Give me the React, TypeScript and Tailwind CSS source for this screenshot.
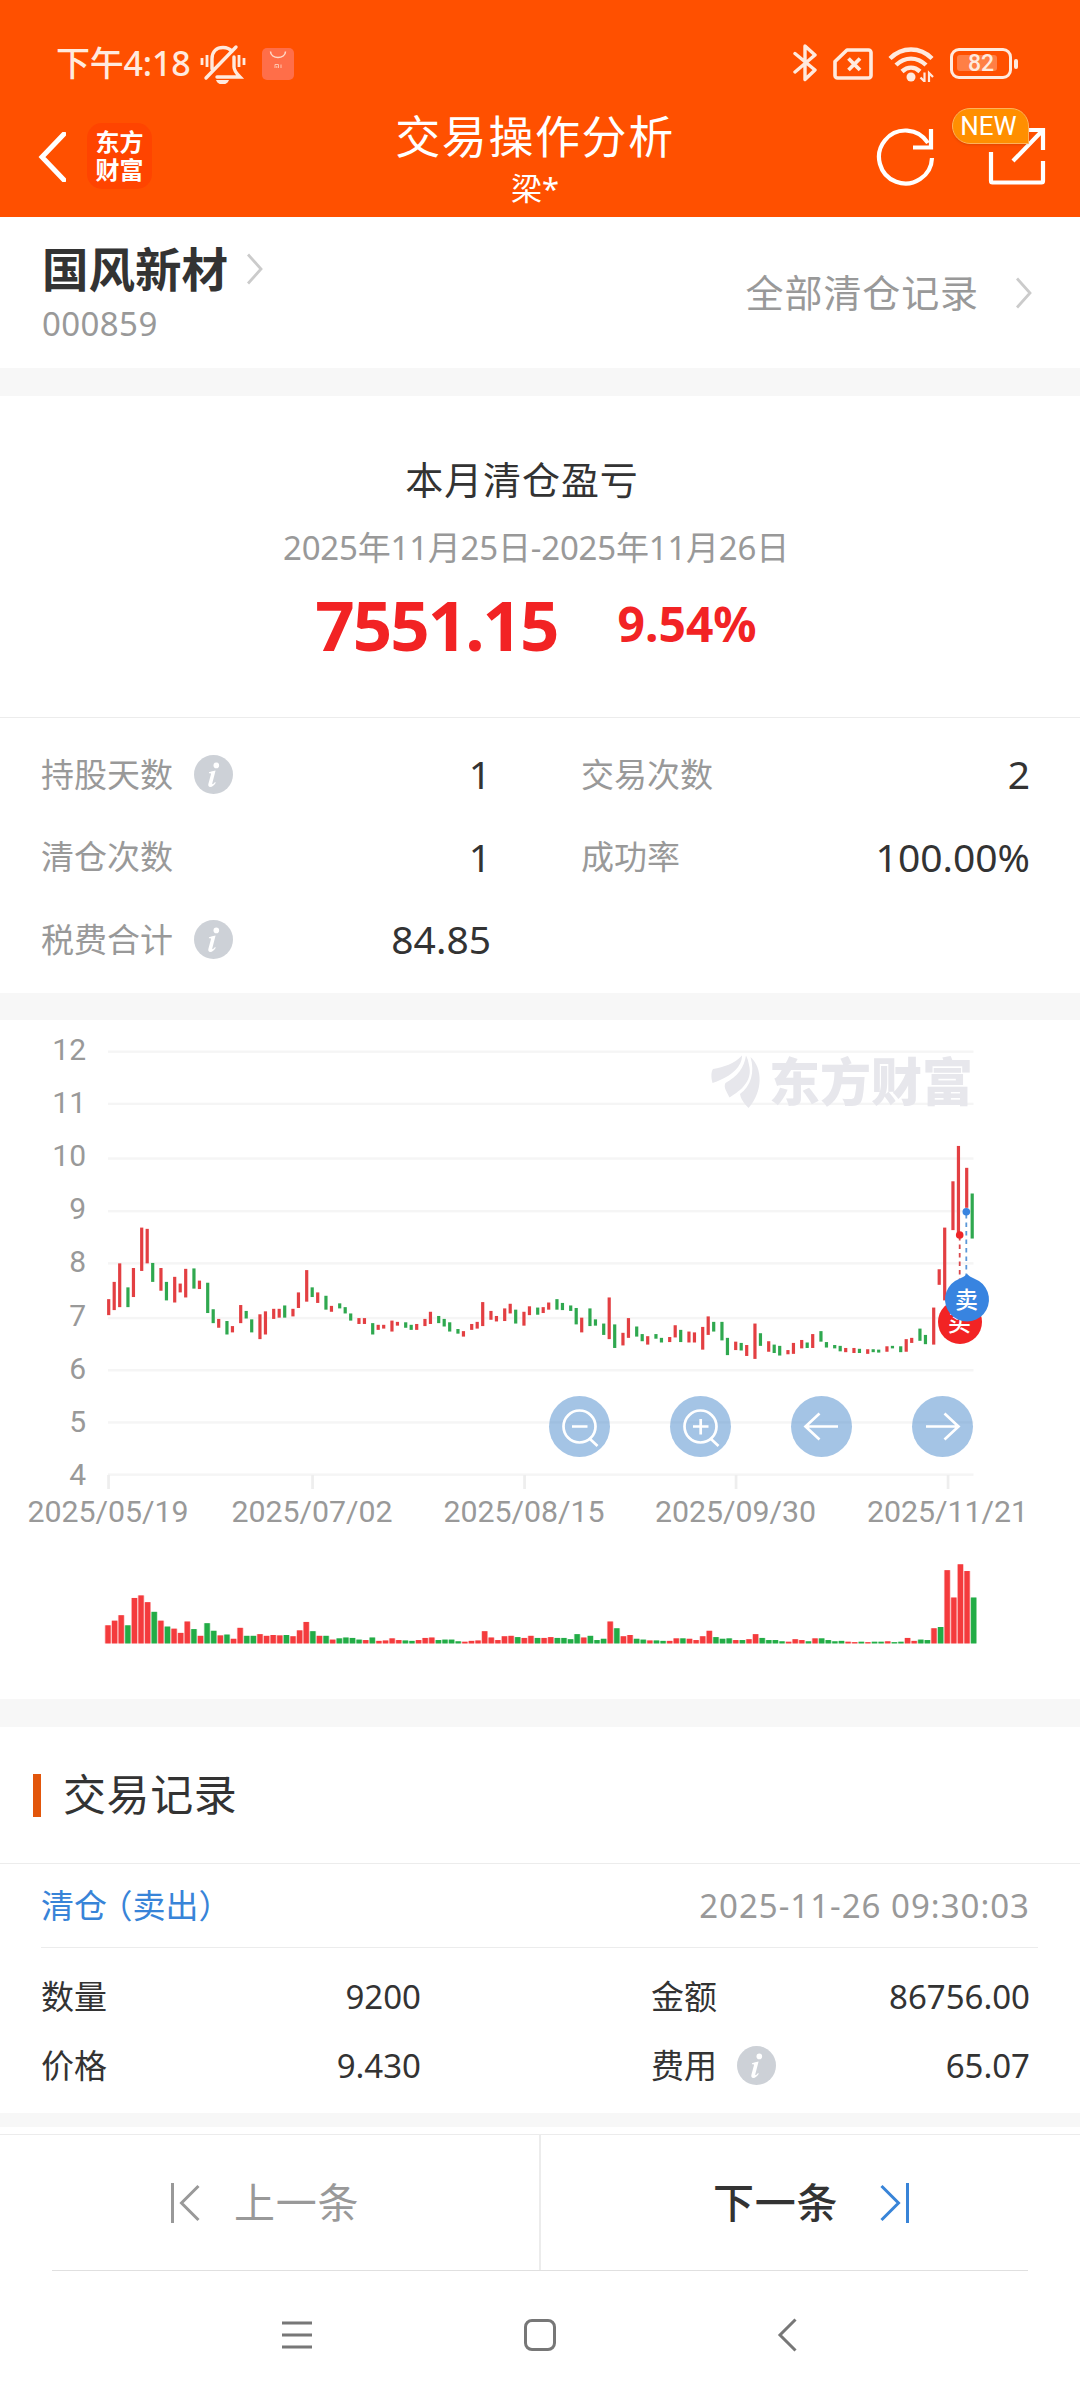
import type { ReactNode } from 'react';

type Bar = [color: 'r' | 'g', top: number, bottom: number, volumeTop: number, volumeColor?: 'r' | 'g'];

const RED = '#e33f42';
const GREEN = '#2fa84f';

// Vertical chart units -> px inside the chart panel
const py = (v: number) => v / 2.376 - 10;

const BARS: Bar[] = [
  ['r', 687, 725, 1462], ['r', 646, 713, 1451], ['r', 602, 706, 1438], ['g', 659, 706, 1462],
  ['r', 613, 682, 1397], ['r', 517, 620, 1391], ['r', 520, 602, 1407], ['g', 601, 646, 1430],
  ['r', 613, 667, 1451], ['g', 646, 690, 1465], ['r', 634, 695, 1470], ['r', 650, 671, 1480],
  ['r', 615, 683, 1453], ['g', 614, 662, 1471], ['r', 643, 663, 1487], ['g', 648, 720, 1457],
  ['g', 711, 744, 1475], ['r', 734, 755, 1486], ['g', 739, 771, 1484], ['r', 751, 766, 1494],
  ['r', 701, 744, 1468], ['g', 715, 733, 1487], ['g', 735, 766, 1487], ['r', 723, 782, 1483],
  ['r', 716, 771, 1487], ['r', 710, 734, 1485], ['r', 710, 731, 1486], ['g', 702, 731, 1485],
  ['r', 710, 728, 1488], ['r', 671, 708, 1474], ['r', 618, 693, 1454], ['g', 659, 682, 1476],
  ['r', 671, 696, 1487], ['g', 679, 712, 1487], ['r', 703, 717, 1496], ['g', 697, 709, 1493],
  ['g', 706, 721, 1491], ['g', 721, 738, 1492], ['r', 732, 746, 1496, 'g'], ['r', 732, 746, 1497],
  ['g', 744, 771, 1491], ['r', 748, 760, 1499], ['r', 748, 757, 1498], ['r', 738, 764, 1493],
  ['r', 741, 750, 1497], ['g', 742, 755, 1498], ['g', 748, 760, 1499], ['r', 746, 760, 1497],
  ['r', 734, 751, 1492], ['r', 717, 746, 1491], ['g', 727, 744, 1497], ['g', 734, 752, 1496],
  ['g', 742, 764, 1496], ['g', 758, 769, 1500], ['r', 763, 776, 1501], ['r', 746, 760, 1499],
  ['r', 741, 757, 1498], ['r', 694, 751, 1476], ['r', 715, 736, 1491], ['r', 727, 740, 1497],
  ['r', 709, 739, 1488], ['r', 698, 721, 1487], ['g', 712, 745, 1490], ['r', 717, 750, 1492],
  ['r', 704, 725, 1487], ['g', 707, 724, 1492], ['r', 706, 720, 1492], ['r', 695, 712, 1490],
  ['g', 687, 712, 1492], ['g', 696, 713, 1492], ['g', 702, 715, 1495], ['g', 708, 747, 1483],
  ['r', 731, 766, 1491], ['g', 709, 751, 1487], ['g', 735, 750, 1497], ['g', 745, 772, 1494],
  ['r', 683, 782, 1453], ['g', 747, 803, 1469], ['r', 767, 797, 1488], ['r', 732, 779, 1485],
  ['g', 752, 776, 1494], ['g', 770, 787, 1496], ['r', 775, 795, 1498], ['g', 770, 781, 1498],
  ['g', 779, 790, 1499], ['r', 777, 789, 1499], ['r', 749, 778, 1493], ['g', 760, 789, 1493],
  ['r', 764, 790, 1494], ['r', 766, 790, 1497], ['r', 753, 807, 1488], ['r', 728, 772, 1475],
  ['g', 741, 764, 1490], ['g', 741, 785, 1494], ['g', 779, 820, 1493], ['r', 788, 808, 1497],
  ['g', 791, 809, 1497], ['r', 796, 822, 1495], ['r', 745, 829, 1483], ['g', 768, 798, 1492],
  ['r', 787, 812, 1497, 'g'], ['g', 795, 815, 1497], ['g', 798, 821, 1500], ['r', 808, 818, 1501],
  ['r', 791, 817, 1495], ['r', 784, 804, 1497], ['g', 790, 803, 1500], ['r', 770, 803, 1493],
  ['g', 763, 788, 1493], ['g', 789, 802, 1497], ['g', 796, 804, 1500], ['g', 798, 811, 1499],
  ['r', 803, 813, 1501], ['r', 803, 815, 1502], ['g', 805, 815, 1501], ['r', 806, 817, 1502],
  ['g', 806, 813, 1501], ['g', 807, 814, 1501], ['r', 799, 812, 1500], ['g', 798, 804, 1502],
  ['g', 799, 813, 1501], ['r', 782, 812, 1492], ['r', 779, 791, 1499], ['g', 757, 786, 1496],
  ['g', 772, 794, 1497], ['r', 707, 795, 1469], ['r', 616, 653, 1466, 'g'], ['r', 517, 690, 1331],
  ['r', 407, 523, 1396], ['r', 323, 530, 1317], ['r', 375, 470, 1333], ['g', 436, 543, 1396],
];

const GRID = [99, 223, 353, 478, 602, 732, 856, 980, 1104];

const DATES = [
  { x: 108.5, label: '2025/05/19' },
  { x: 312.5, label: '2025/07/02' },
  { x: 524.5, label: '2025/08/15' },
  { x: 736, label: '2025/09/30' },
  { x: 948, label: '2025/11/21' },
];

function Chevron({ className }: { className: string }) {
  return (
    <svg className={`h-8 w-4 shrink-0 ${className}`} viewBox="0 0 16 32" fill="none" stroke="#cbcbcb" strokeWidth="2.8">
      <path d="M1 1.5 14 16 1 30.5" />
    </svg>
  );
}

function InfoIcon({ className }: { className: string }) {
  return (
    <svg className={`size-[39px] shrink-0 ${className}`} viewBox="0 0 39 39">
      <circle cx="19.5" cy="19.5" r="19.5" fill="#cdd1d7" />
      <circle cx="22.3" cy="10.4" r="2.8" fill="#fff" />
      <path
        d="M15 17.3c2-.9 4.300-1.500 6.600-1.800l-3.300 12.700c-.2.900.1 1.200.7.900.7-.4 1.300-1.100 2-2l.8.6c-1.600 2.700-3.500 4.200-5.500 4.200-1.700 0-2.400-1.200-1.900-3.100l2.500-9.300c.2-.8-.1-1.200-1-1.200h-1z"
        fill="#fff"
      />
    </svg>
  );
}

function StatusBar() {
  return (
    <div className="flex h-[82px] items-end pr-[62px] pl-[56px] text-[#ffeade]">
      <span className="h-[38px] w-[136px] text-[34px] leading-[38px] font-medium tracking-[-0.2px] whitespace-nowrap">
        下午4:18
      </span>
      <svg className="mb-[-2px] ml-[8px] h-10 w-[46px]" viewBox="0 0 46 40" fill="none" stroke="currentColor" strokeWidth="3.4">
        <path d="M12 25V15C12 7 17 3.500 23 3.500c4 0 7 1.500 9 4M34 13v10c0 4 3 7 6 10H17M6 34 36 3" strokeLinecap="round" />
        <path d="M2 14v7M7 11v12M39 11v12M44 14v7" strokeWidth="2.800" />
        <path d="M16 36h13c-1 3-3.500 4.500-6.500 4.500S17 39 16 36Z" fill="currentColor" stroke="none" />
      </svg>
      <svg className="mb-[2px] ml-[16px] size-8" viewBox="0 0 32 32" fill="none">
        <rect width="32" height="32" rx="5" fill="#ff6e49" />
        <path d="M8.500 3.500c0 8 15 8 15 0" stroke="#ffd9c8" strokeWidth="1.500" />
        <path d="M13 20v-3.500h3.500V20M19 16.500V20M14.800 18v2" stroke="#ffc4ae" />
      </svg>

      <svg className="ml-auto h-[39px] w-6" viewBox="0 0 24 39" fill="none" stroke="currentColor" strokeWidth="3.400" strokeLinejoin="round" strokeLinecap="round">
        <path d="M2 10.500 22 27 12 36.500V3L22 12 2 29" />
      </svg>
      <svg className="mb-[2px] ml-4 h-8 w-10" viewBox="0 0 40 32" fill="none" stroke="currentColor" strokeWidth="3.600">
        <path d="M14 2h21.500a2.500 2.500 0 0 1 2.500 2.500v23a2.500 2.500 0 0 1-2.500 2.500h-31A2.500 2.500 0 0 1 2 27.500V13.500Z" strokeLinejoin="round" />
        <path d="M15.500 10.500 27 22M27 10.500 15.500 22" strokeWidth="3.800" />
      </svg>
      <svg className="ml-[15px] h-9 w-[46px]" viewBox="0 0 46 36" fill="none" stroke="currentColor" strokeWidth="4.400">
        <path d="M2 12.500c12-12 30-12 42 0" />
        <path d="M8 19c9-8.500 21-8.500 30 0" />
        <path d="M14 25.500c5.500-5 12.500-5 18 0" />
        <circle cx="23" cy="31" r="4.500" fill="currentColor" stroke="none" />
        <path d="M36.500 26.500v9l-4-4M41 36v-9l4 4" strokeWidth="2.200" />
      </svg>
      <div className="mb-[3px] ml-4 flex items-center">
        <div className="relative flex h-[31px] w-[62px] items-center justify-center rounded-[9px] border-[3.500px] border-current">
          <div className="absolute top-[4px] left-[4px] h-4 w-10 rounded-[3px] bg-[#ff7f45]" />
          <span className="relative font-['Roboto'] text-[23px] leading-none font-medium">82</span>
        </div>
        <div className="ml-[2px] h-[10px] w-1 rounded-full bg-current" />
      </div>
    </div>
  );
}

function TitleBar() {
  return (
    <div className="relative flex h-[135px] text-white">
      <svg className="mt-[50px] ml-[38px] h-[50px] w-7 shrink-0" viewBox="0 0 28 50" fill="none" stroke="currentColor" strokeWidth="5">
        <path d="M26 2 4 25l22 23" strokeLinecap="round" />
      </svg>
      <div className="mt-[41px] ml-[21px] flex h-[66px] w-[65px] shrink-0 flex-col items-center justify-center rounded-[15px] bg-[#ff4400] text-[24px] leading-[28px] font-bold">
        <span>东方</span>
        <span>财富</span>
      </div>
      <div className="ml-[241px] flex w-[284px] flex-col items-center pt-[27px]">
        <h1 className="text-[45px] leading-[56px] tracking-[1.600px] whitespace-nowrap">交易操作分析</h1>
        <p className="text-[31px] leading-[46px]">梁*</p>
      </div>
      <svg className="mt-[44px] ml-[199px] h-[60px] w-[60px] shrink-0" viewBox="0 0 60 60" fill="none" stroke="currentColor" strokeWidth="4.200">
        <path d="M56 32A26.500 26.500 0 1 1 52 17" />
        <path d="M55 3v18.500H37" />
      </svg>
      <svg className="mt-[44px] ml-[52px] h-[60px] w-[58px] shrink-0" viewBox="0 0 58 60" fill="none" stroke="currentColor" strokeWidth="4.200">
        <path d="M3 26v29a1.500 1.500 0 0 0 1.500 1.500h49A1.500 1.500 0 0 0 55 55V35M38 4h17v20M55 4 25 35" />
      </svg>
      <div className="absolute top-[26px] left-[952px] flex h-[36px] w-[77px] items-center justify-center rounded-[18px] rounded-br-none border border-[#ffb25a] bg-[#ff8f00] pr-1 font-['Roboto'] text-[26px] leading-none shadow-sm">
        NEW
      </div>
    </div>
  );
}

function Stat({ label, value, info, className }: { label: string; value: string; info?: boolean; className: string }) {
  return (
    <div className={`flex h-[82.500px] items-center ${className}`}>
      <span className="text-[33px] text-[#999]">{label}</span>
      {info && <InfoIcon className="ml-[21px]" />}
      <span className="ml-auto text-[39px] text-[#333]">{value}</span>
    </div>
  );
}

function Detail({ label, value, info }: { label: string; value: string; info?: boolean }) {
  return (
    <div className="flex h-[69px] items-center text-[33px] text-[#333]">
      <span>{label}</span>
      {info && <InfoIcon className="ml-[20px]" />}
      <span className="ml-auto">{value}</span>
    </div>
  );
}

function RoundButton({ children }: { children: ReactNode }) {
  return (
    <button type="button" className="size-[61px] rounded-full bg-[#498acb]/50">
      <svg viewBox="0 0 61 61" fill="none" stroke="#fff" strokeWidth="2.700">
        {children}
      </svg>
    </button>
  );
}

function PriceChart() {
  return (
    <div className="relative h-[679px]">
      <svg width="1080" height="679" viewBox="0 0 1080 679" className="block">
        {/* Grid and axes */}
        {GRID.map((v, i) => (
          <g key={v}>
            <rect x="108" y={py(v) - 1.2} width="865.500" height="2.400" fill="#f5f5f5" />
            <text x="86" y={40 + i * 53.1} textAnchor="end" className="fill-[#999] font-['Roboto'] text-[30px]">
              {12 - i}
            </text>
          </g>
        ))}
        {DATES.map((d) => (
          <g key={d.label}>
            <rect x={d.x - 1.3} y="455" width="2.700" height="14" fill="#eee" />
            <text x={d.x - 0.5} y="502" textAnchor="middle" className="fill-[#999] font-['Roboto'] text-[30.300px]">
              {d.label}
            </text>
          </g>
        ))}

        {/* Watermark */}
        <g fill="#e7e7ec">
          <path d="M712.500 63C711 57 711 52 713 49C724 47 734 44 742 35.500C742 46 733 56 712.500 63Z" />
          <path d="M746 35.500C744 48 738 56 725.500 63C723 67 727 72 729.500 77.500C742 70 753 60 749 45Q748 39 746 35.500Z" />
          <path d="M750.500 37C763 48 763 72 748.500 88C745 84 741 80 740 74C751 66 755 52 750.500 37Z" />
          <text x="769" y="81" className="font-['Noto_Sans_CJK_SC',sans-serif] text-[51px] font-black">
            东方财富
          </text>
        </g>

        {BARS.map(([color, top, bottom, volumeTop, volumeColor], i) => {
          const x = 108.6 + 2.75 * Math.floor(i * 2.4 + 0.001);
          const vx = 108 + i * 6.608;
          const fill = (volumeColor ?? color) === 'r' ? '#f43b3d' : '#22ac46';
          return (
            <g key={i}>
              <rect x={x - 1.5} y={py(top)} width="3.200" height={(bottom - top) / 2.376} fill={color === 'r' ? RED : GREEN} />
              <rect x={vx - 3.3} y={py(volumeTop)} width="6.600" height={(1505 - volumeTop) / 2.376} fill={fill} opacity="0.350" />
              <rect x={vx - 2.6} y={py(volumeTop)} width="5.200" height={(1505 - volumeTop) / 2.376} fill={fill} />
            </g>
          );
        })}

        {/* Buy / sell markers */}
        <path d="M959.700 216v50" stroke="#d9474b" strokeWidth="1.800" strokeDasharray="4.500 4" />
        <path d="M966.300 194v62" stroke="#5c98d8" strokeWidth="1.800" strokeDasharray="4.500 4" />
        <circle cx="959.700" cy="215" r="3.800" fill="#ee2528" />
        <circle cx="966.300" cy="191.700" r="3.800" fill="#3884e0" />
        <circle cx="960" cy="302" r="22" fill="#f22324" />
        <text x="959.500" y="311" textAnchor="middle" fill="#fff" className="text-[23px] font-medium">买</text>
        <path d="M967 254c4 4 8 4.500 12 7a22 22 0 1 1-24 0c4-2.500 8-3 12-7Z" fill="#3884e0" />
        <text x="966.500" y="288" textAnchor="middle" fill="#fff" className="text-[23px] font-medium">卖</text>
      </svg>

      <div className="absolute top-[376px] left-[548.500px] flex gap-[60px]">
        <RoundButton>
          <circle cx="30.500" cy="30.500" r="16" />
          <path d="M23 30.500h15.500M41 43l7.500 7" />
        </RoundButton>
        <RoundButton>
          <circle cx="30.500" cy="30.500" r="16" />
          <path d="M23 30.500h15.500M30.700 23v15.500M41 43l7.500 7" />
        </RoundButton>
        <RoundButton>
          <path d="M47 30.500H14.500M28.500 17.500l-14 13 14 13" />
        </RoundButton>
        <RoundButton>
          <path d="M14 30.500h32.500M32.500 17.500l14 13-14 13" />
        </RoundButton>
      </div>
    </div>
  );
}

export default function App() {
  return (
    <div className="h-[2400px] w-[1080px] overflow-hidden bg-white font-['Noto_Sans','Noto_Sans_CJK_SC',sans-serif] text-[#333]">
      <header className="h-[217px] bg-[#ff5000]">
        <StatusBar />
        <TitleBar />
      </header>

      {/* Stock */}
      <section className="flex h-[151px] justify-between px-[42px]">
        <div className="pt-[22px]">
          <div className="flex items-center">
            <h2 className="text-[46.500px] leading-[60px] font-bold">国风新材</h2>
            <Chevron className="ml-[19px]" />
          </div>
          <p className="text-[33px] leading-[50px] tracking-[0.400px] text-[#999]">000859</p>
        </div>
        <div className="flex items-center pr-[6px] text-[38px] tracking-[0.900px] text-[#999]">
          全部清仓记录
          <Chevron className="ml-[37px]" />
        </div>
      </section>
      <div className="h-7 bg-[#f7f7f7]" />

      {/* Summary */}
      <section className="flex h-[322px] flex-col items-center border-b border-[#ececec] pt-[56px]">
        <h3 className="mr-[36px] text-[38px] leading-[54px] tracking-[0.900px]">本月清仓盈亏</h3>
        <p className="mr-[8px] mt-[18px] text-[33px] leading-[48px] tracking-[-0.200px] text-[#999]">
          2025年11月25日-2025年11月26日
        </p>
        <div className="mr-[8px] mt-[14px] flex items-center font-bold text-[#f22324]">
          <span className="text-[69px] leading-[76px] tracking-[-2px]">7551.15</span>
          <span className="ml-[60px] text-[48px] leading-[76px]">9.54%</span>
        </div>
      </section>
      <section className="flex h-[275px] flex-wrap content-start pt-[15px] pr-[50px] pl-[41px]">
        <Stat label="持股天数" value="1" info className="w-[450px]" />
        <Stat label="交易次数" value="2" className="ml-[90px] w-[449px]" />
        <Stat label="清仓次数" value="1" className="w-[450px]" />
        <Stat label="成功率" value="100.00%" className="ml-[90px] w-[449px]" />
        <Stat label="税费合计" value="84.85" info className="w-[450px]" />
      </section>
      <div className="h-[27px] bg-[#f7f7f7]" />

      <PriceChart />
      <div className="h-7 bg-[#f7f7f7]" />

      {/* Trade records */}
      <section className="h-[386px]">
        <div className="flex h-[137px] items-center border-b border-[#ececec] pl-[33px]">
          <div className="h-[43px] w-2 bg-[#e2560b]" />
          <h3 className="ml-[22px] text-[43px] tracking-[0.600px]">交易记录</h3>
        </div>
        <div className="mr-[42px] ml-[41px] flex h-[84px] items-center justify-between border-b border-[#ececec] pr-[8px] text-[33px]">
          <span className="flex text-[#3884d8]">
            清仓
            <span className="ml-[9px] font-['Noto_Sans_CJK_SC',sans-serif] leading-[46px] [font-feature-settings:'halt']">（卖出）</span>
          </span>
          <span className="tracking-[1px] text-[#999]">2025-11-26 09:30:03</span>
        </div>
        <div className="grid grid-cols-[380px_379px] justify-between pt-[14px] pr-[50px] pl-[41px]">
          <Detail label="数量" value="9200" />
          <Detail label="金额" value="86756.00" />
          <Detail label="价格" value="9.430" />
          <Detail label="费用" value="65.07" info />
        </div>
      </section>
      <div className="h-[14px] bg-[#f7f7f7]" />

      {/* Prev / next */}
      <nav className="mt-[7px] border-t border-[#ececec]">
        <div className="grid h-[135px] grid-cols-[541px_539px] text-[41px] tracking-[0.800px]">
          <div className="flex items-center border-r-2 border-[#ececec] pl-[171px] text-[#999]">
            <svg className="mr-[34px] h-10 w-[29px]" viewBox="0 0 29 40" fill="none" stroke="currentColor" strokeWidth="3">
              <path d="M1.500 0v40M27.500 3 10.500 20l17 17" />
            </svg>
            上一条
          </div>
          <div className="flex items-center pl-[172px] font-medium">
            下一条
            <svg className="ml-[42px] h-10 w-[29px]" viewBox="0 0 29 40" fill="none" stroke="#3884d8" strokeWidth="3">
              <path d="M27.500 0v40M1.500 3l17 17-17 17" />
            </svg>
          </div>
        </div>
        <div className="mx-[52px] h-px bg-[#e0e0e0]" />
      </nav>

      {/* System navigation */}
      <div className="flex h-[128px] items-center pl-[281px] text-[#777]">
        <svg className="h-8 w-8" viewBox="0 0 32 32" stroke="currentColor" strokeWidth="3">
          <path d="M1 4h30M1 16h30M1 28h30" />
        </svg>
        <div className="ml-[211px] size-8 rounded-[8px] border-3 border-current" />
        <svg className="ml-[221px] h-[34px] w-5" viewBox="0 0 20 34" fill="none" stroke="currentColor" strokeWidth="3">
          <path d="M18.500 1.500 3 17l15.500 15.500" />
        </svg>
      </div>
    </div>
  );
}
